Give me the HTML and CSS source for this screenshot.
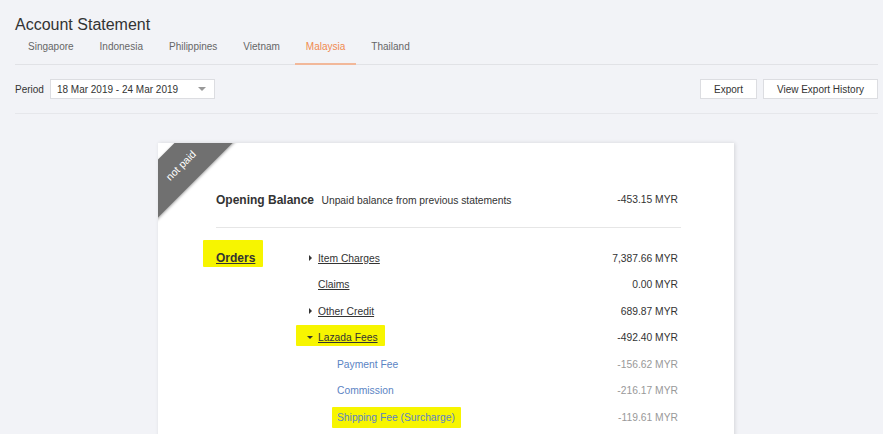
FILE: index.html
```html
<!DOCTYPE html>
<html>
<head>
<meta charset="utf-8">
<link rel="stylesheet" href="styles.css">
</head>
<body>
<div class="page">
  <h1 class="title">Account Statement</h1>
  <nav class="tabs">
    <span class="tab">Singapore</span>
    <span class="tab">Indonesia</span>
    <span class="tab">Philippines</span>
    <span class="tab">Vietnam</span>
    <span class="tab active">Malaysia</span>
    <span class="tab">Thailand</span>
  </nav>
  <div class="toolbar">
    <div class="period">
      <span class="period-label">Period</span>
      <div class="select">
        <span>18 Mar 2019 - 24 Mar 2019</span>
        <span class="caret"></span>
      </div>
    </div>
    <div class="actions">
      <button class="btn">Export</button>
      <button class="btn">View Export History</button>
    </div>
  </div>

  <div class="card">
    <div class="ribbon">not paid</div>
    <div class="opening">
      <div class="opening-text">
        <span class="opening-title">Opening Balance</span>
        <span class="opening-desc">Unpaid balance from previous statements</span>
      </div>
      <span class="amt">-453.15 MYR</span>
    </div>
    <div class="divider"></div>
    <div class="section">
      <div class="section-label"><span class="hl hl-orders">Orders</span></div>
      <div class="lines">
        <div class="line">
          <span class="name"><span class="tri tri-right"></span><span class="link">Item Charges</span></span>
          <span class="amt">7,387.66 MYR</span>
        </div>
        <div class="line">
          <span class="name indent1"><span class="link">Claims</span></span>
          <span class="amt">0.00 MYR</span>
        </div>
        <div class="line">
          <span class="name"><span class="tri tri-right"></span><span class="link">Other Credit</span></span>
          <span class="amt">689.87 MYR</span>
        </div>
        <div class="line">
          <span class="name hl hl-lazada"><span class="tri tri-down"></span><span class="link">Lazada Fees</span></span>
          <span class="amt">-492.40 MYR</span>
        </div>
        <div class="line">
          <span class="name indent2"><span class="sub">Payment Fee</span></span>
          <span class="amt muted">-156.62 MYR</span>
        </div>
        <div class="line">
          <span class="name indent2"><span class="sub">Commission</span></span>
          <span class="amt muted">-216.17 MYR</span>
        </div>
        <div class="line">
          <span class="name indent2"><span class="sub hl hl-ship">Shipping Fee (Surcharge)</span></span>
          <span class="amt muted">-119.61 MYR</span>
        </div>
      </div>
    </div>
  </div>
</div>
</body>
</html>
```

FILE: styles.css
```css
* { box-sizing: border-box; }
html, body { margin: 0; padding: 0; }
body {
  background: #f2f3f7;
  font-family: "Liberation Sans", Arial, sans-serif;
  color: #333;
  overflow: hidden;
  height: 434px;
}
.page {
  padding: 15px 5px 0 15px;
}
.title {
  margin: 0;
  font-size: 16px;
  line-height: 20px;
  font-weight: normal;
  color: #333;
}
.tabs {
  display: flex;
  border-bottom: 1px solid #e1e2e6;
  padding-left: 2px;
}
.tab {
  font-size: 10px;
  line-height: 14px;
  padding: 5px 11px 9px;
  color: #666;
  border-bottom: 2px solid transparent;
  margin-bottom: -1px;
  margin-right: 4px;
}
.tab.active {
  color: #f08a50;
  border-bottom-color: #f2b89a;
}
.toolbar {
  display: flex;
  justify-content: space-between;
  align-items: center;
  margin-top: 14px;
  padding-bottom: 14px;
  border-bottom: 1px solid #e6e7eb;
}
.period {
  display: flex;
  align-items: center;
  gap: 6px;
  font-size: 10px;
}
.select {
  width: 165px;
  height: 20px;
  background: #fff;
  border: 1px solid #dcdde1;
  display: flex;
  align-items: center;
  justify-content: space-between;
  padding: 0 8px 0 6px;
  font-size: 10px;
  color: #333;
}
.caret {
  width: 0;
  height: 0;
  border-left: 4px solid transparent;
  border-right: 4px solid transparent;
  border-top: 4px solid #999;
}
.actions {
  display: flex;
  gap: 6px;
}
.btn {
  height: 20px;
  background: #fff;
  border: 1px solid #dcdde1;
  padding: 0 13px;
  font-family: "Liberation Sans", Arial, sans-serif;
  font-size: 10px;
  color: #333;
}
.card {
  position: relative;
  z-index: 0;
  overflow: hidden;
  width: 576px;
  margin: 29px 0 0 143px;
  background: #fff;
  box-shadow: 1px 0 4px rgba(0,0,0,0.12);
  padding: 43px 56px 20px 58px;
  min-height: 300px;
}
.ribbon {
  position: absolute;
  left: -47px;
  top: 2px;
  width: 140px;
  height: 41px;
  line-height: 41px;
  background: #707070;
  color: #fff;
  font-size: 10.5px;
  text-align: center;
  transform: rotate(-45deg);
  box-shadow: 0 1px 3px rgba(0,0,0,0.35);
}
.opening {
  display: flex;
  justify-content: space-between;
  align-items: center;
  height: 26px;
}
.opening-title {
  font-weight: bold;
  font-size: 12px;
  margin-right: 3px;
}
.opening-desc {
  font-size: 10.3px;
}
.amt {
  font-size: 10.3px;
  color: #333;
}
.amt.muted { color: #999; }
.divider {
  height: 1px;
  background: #e6e6e6;
  margin: 15px -3px 17px 0;
}
.section {
  display: flex;
}
.section-label {
  width: 93px;
  height: 26.5px;
  display: flex;
  align-items: center;
  font-weight: bold;
  font-size: 12px;
  text-decoration: underline;
}
.lines { flex: 1; }
.line {
  height: 26.5px;
  display: flex;
  align-items: center;
  justify-content: space-between;
}
.name {
  display: inline-flex;
  align-items: center;
  font-size: 10.3px;
}
.indent1 { padding-left: 9px; }
.indent2 { padding-left: 28px; }
.link {
  color: #333;
  text-decoration: underline;
}
.sub { color: #5b84c4; }
.tri {
  width: 0;
  height: 0;
  margin-right: 6px;
}
.tri-right {
  border-top: 3px solid transparent;
  border-bottom: 3px solid transparent;
  border-left: 3px solid #333;
}
.tri-down {
  border-left: 3px solid transparent;
  border-right: 3px solid transparent;
  border-top: 3px solid #333;
  margin-left: -2px;
  margin-right: 5px;
}
.hl { position: relative; }
.hl::before {
  content: "";
  position: absolute;
  z-index: -1;
  background: #f7f500;
  border-radius: 1px;
}
.hl-orders::before { left: -13px; right: -8px; top: -11px; bottom: -2px; }
.hl-lazada::before { left: -13px; right: -7px; top: -7px; bottom: -3px; }
.hl-ship::before { left: -5px; right: -6px; top: -5px; bottom: -5px; }
```
